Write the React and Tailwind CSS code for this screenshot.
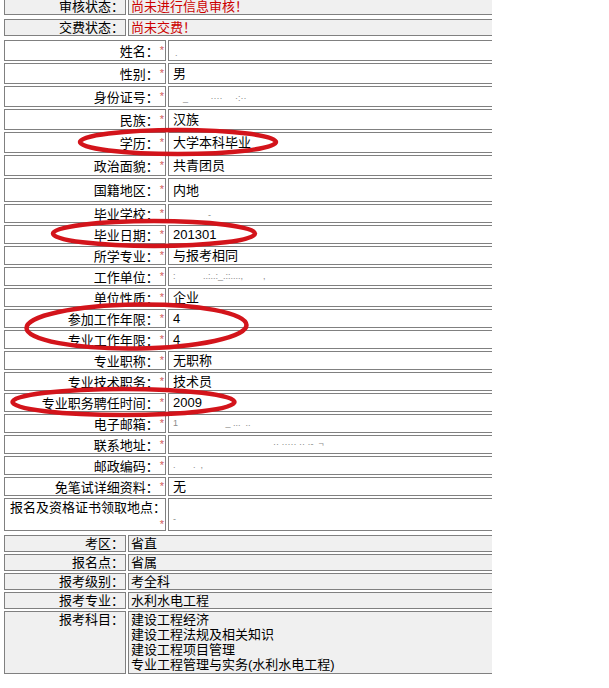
import React from "react";

// grey-filled rows (status block at the top, exam block at the bottom)
function GrayRow({ label, h, top, children }) {
  return (
    <div className={`flex gap-[2px] ${h}`}>
      <div
        className={`w-[122px] shrink-0 border border-[#808080] bg-[#f0f0f0] flex justify-end pr-[1px] ${
          top ? "items-start" : "items-center"
        }`}
      >
        {label}：
      </div>
      <div
        className={`flex-1 border border-r-0 border-[#808080] bg-[#f0f0f0] pl-[2px] ${
          top ? "" : "flex items-center"
        }`}
      >
        {children}
      </div>
    </div>
  );
}

const star = "pl-[1px] pr-[1px] text-[11px] text-[#d05a5a] align-[2px]";

// white rows with the red required star
function InfoRow({ label, h, children }) {
  return (
    <div className={`flex gap-[2px] ${h}`}>
      <div className="w-[162px] shrink-0 border border-[#808080] bg-white flex items-center justify-end">
        <span className="leading-[16px]">
          {label}：<span className={star}>*</span>
        </span>
      </div>
      <div className="flex-1 border border-r-0 border-[#808080] bg-white flex items-center pl-[4px]">
        {children}
      </div>
    </div>
  );
}

// faint leftovers of the erased personal data
const dim = "text-[9px] leading-[9px] text-[#8a8a8a] whitespace-pre";

export default function App() {
  return (
    <div className="relative w-[609px] h-[688px] overflow-hidden bg-white text-black text-[13px] leading-[15px] font-['Liberation_Sans','Noto_Sans_CJK_SC',sans-serif]">
      <div className="ml-[4px] -mt-[2px] w-[488px] flex flex-col">
        {/* STATUS */}
        <GrayRow label="审核状态" h="h-[17px]">
          <span className="text-[#cc0000]">尚未进行信息审核！</span>
        </GrayRow>
        <div className="mt-[4px]">
          <GrayRow label="交费状态" h="h-[17px]">
            <span className="text-[#cc0000]">尚未交费！</span>
          </GrayRow>
        </div>

        {/* PERSONAL INFO */}
        <div className="mt-[4px] flex flex-col gap-[2px]">
          <InfoRow label="姓名" h="h-[21px]">
            <span className={`${dim} mt-[6px] ml-[2px]`}>.</span>
          </InfoRow>
          <InfoRow label="性别" h="h-[21px]">男</InfoRow>
          <InfoRow label="身份证号" h="h-[21px]">
            <span className={`${dim} mt-[4px]`}>{"    _         ····     ·:··"}</span>
          </InfoRow>
          <InfoRow label="民族" h="h-[21px]">汉族</InfoRow>
          <InfoRow label="学历" h="h-[21px]">大学本科毕业</InfoRow>
          <InfoRow label="政治面貌" h="h-[21px]">共青团员</InfoRow>
          <InfoRow label="国籍地区" h="h-[24px]">内地</InfoRow>
          <InfoRow label="毕业学校" h="h-[19px]">
            <span className={`${dim} mt-[4px]`}>{"              -"}</span>
          </InfoRow>
          <InfoRow label="毕业日期" h="h-[19px]">201301</InfoRow>
          <InfoRow label="所学专业" h="h-[19px]">与报考相同</InfoRow>
          <InfoRow label="工作单位" h="h-[19px]">
            <span className={dim}>{":           ..:..:_.::....,        ,"}</span>
          </InfoRow>
          <InfoRow label="单位性质" h="h-[19px]">企业</InfoRow>
          <InfoRow label="参加工作年限" h="h-[19px]">4</InfoRow>
          <InfoRow label="专业工作年限" h="h-[19px]">4</InfoRow>
          <InfoRow label="专业职称" h="h-[19px]">无职称</InfoRow>
          <InfoRow label="专业技术职务" h="h-[19px]">技术员</InfoRow>
          <InfoRow label="专业职务聘任时间" h="h-[19px]">2009</InfoRow>
          <InfoRow label="电子邮箱" h="h-[19px]">
            <span className={dim}>{"1                   _ ...  .."}</span>
          </InfoRow>
          <InfoRow label="联系地址" h="h-[19px]">
            <span className={dim}>{"                                        ·· ····· ·· ·-  ¬"}</span>
          </InfoRow>
          <InfoRow label="邮政编码" h="h-[19px]">
            <span className={dim}>{".       .  ,"}</span>
          </InfoRow>
          <InfoRow label="免笔试详细资料" h="h-[19px]">无</InfoRow>

          {/* two-line label: star drops to the second line */}
          <div className="flex gap-[2px] h-[33px]">
            <div className="w-[162px] shrink-0 border border-[#808080] bg-white flex flex-col pt-[1px] leading-[16px]">
              <div className="whitespace-nowrap pl-[5px]">报名及资格证书领取地点：</div>
              <div className="text-right">
                <span className={star}>*</span>
              </div>
            </div>
            <div className="flex-1 border border-r-0 border-[#808080] bg-white flex items-end pl-[4px] pb-[2px]">
              <span className={`${dim} mb-[4px]`}>-</span>
            </div>
          </div>
        </div>

        {/* EXAM */}
        <div className="mt-[4px] flex flex-col gap-[2px]">
          <GrayRow label="考区" h="h-[17px]">省直</GrayRow>
          <GrayRow label="报名点" h="h-[17px]">省属</GrayRow>
          <GrayRow label="报考级别" h="h-[17px]">考全科</GrayRow>
          <GrayRow label="报考专业" h="h-[17px]">水利水电工程</GrayRow>
          <GrayRow label="报考科目" h="h-[63px]" top>
            <div>建设工程经济</div>
            <div>建设工程法规及相关知识</div>
            <div>建设工程项目管理</div>
            <div>专业工程管理与实务(水利水电工程)</div>
          </GrayRow>
        </div>
      </div>

      {/* hand-drawn red marks over the form */}
      <svg
        className="pointer-events-none absolute left-0 top-0"
        width="609"
        height="688"
        viewBox="0 0 609 688"
      >
        <g fill="none" stroke="#d3141b" strokeWidth="4.5">
          <ellipse cx="178" cy="142" rx="98" ry="12" />
          <ellipse cx="154" cy="233.5" rx="101" ry="12.5" />
          <ellipse cx="136.5" cy="326.5" rx="110" ry="22" transform="rotate(-0.8 136.5 326.5)" />
          <ellipse cx="123.5" cy="402" rx="111" ry="13" />
        </g>
      </svg>
    </div>
  );
}
